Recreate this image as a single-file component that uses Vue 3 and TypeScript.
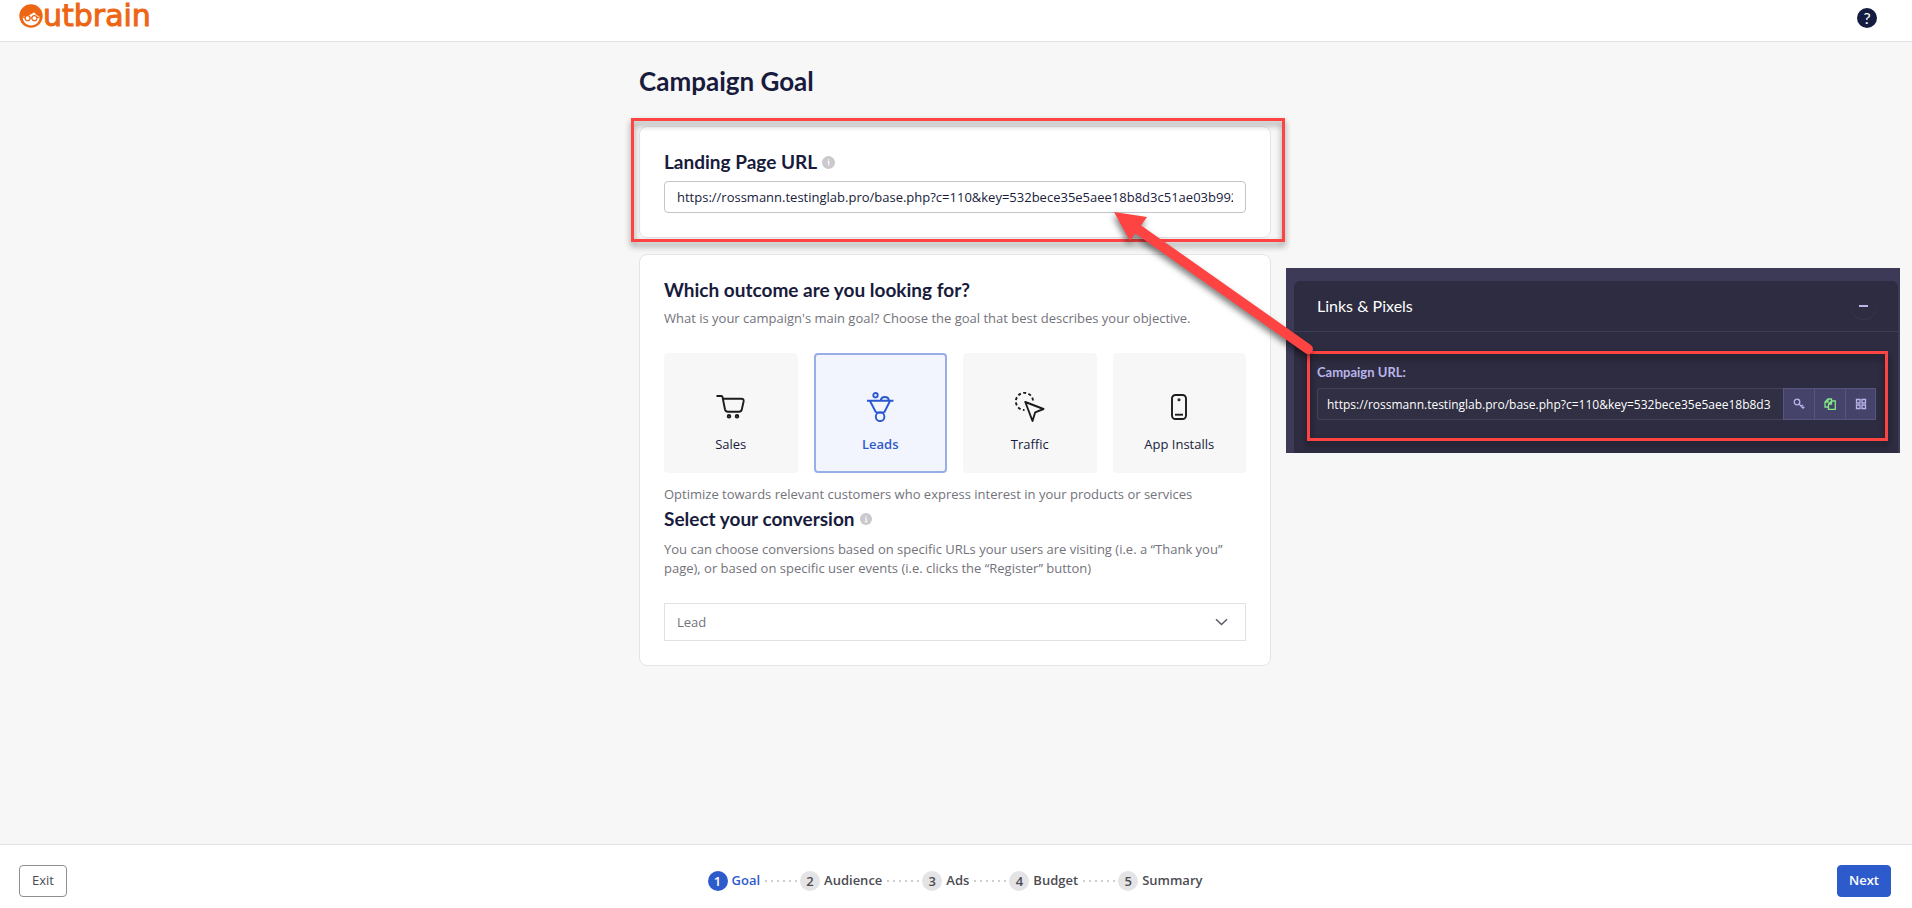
<script setup lang="ts">
import { ref } from 'vue'

interface Goal {
  id: string
  label: string
}

const goals: Goal[] = [
  { id: 'sales', label: 'Sales' },
  { id: 'leads', label: 'Leads' },
  { id: 'traffic', label: 'Traffic' },
  { id: 'apps', label: 'App Installs' },
]
const steps: string[] = ['Goal', 'Audience', 'Ads', 'Budget', 'Summary']

const selected = ref<string>('leads')
const conversion = ref<string>('Lead')
const landingUrl = ref<string>(
  'https://rossmann.testinglab.pro/base.php?c=110&key=532bece35e5aee18b8d3c51ae03b992',
)
const campaignUrl = ref<string>(
  'https://rossmann.testinglab.pro/base.php?c=110&key=532bece35e5aee18b8d3',
)
</script>

<template>
  <div class="app">
    <header class="topbar">
      <a class="logo" href="#" aria-label="Outbrain">
        <svg width="24" height="24" viewBox="0 0 24 24" aria-hidden="true">
          <circle cx="12" cy="12" r="11.7" fill="#ee6513" />
          <path
            d="M3.600 12.800C8 12.300 12.500 10.500 15.200 8.200C16.500 10.200 18.500 11.800 20.600 12.500C21 17.600 17 21.500 12.100 21.500C7.300 21.500 3.600 18 3.600 12.800Z"
            fill="#fff"
          />
          <g fill="#fff" stroke="#ee6513" stroke-width="1.2">
            <circle cx="8.6" cy="14.2" r="2.5" />
            <circle cx="15.4" cy="14.2" r="2.5" />
            <path d="M11.100 13.800h1.800M6.100 13.600L3.200 13M17.900 13.600L20.800 13" fill="none" />
          </g>
        </svg>
        <span class="wordmark">utbrain</span>
      </a>
      <button class="help" type="button" aria-label="Help">?</button>
    </header>

    <main class="content">
      <div class="column">
        <h1>Campaign Goal</h1>

        <section class="card">
          <h2>
            <label for="landing">Landing Page URL</label>
            <svg class="info" width="13" height="13" viewBox="0 0 13 13" aria-hidden="true">
              <circle cx="6.5" cy="6.5" r="6.5" fill="#c9c9ce" />
              <path d="M5.600 5.600h1.200v4M6.500 3.200v1.200" fill="none" stroke="#fff" stroke-width="1.100" />
            </svg>
          </h2>
          <input id="landing" v-model="landingUrl" class="url" type="text" />
        </section>

        <section class="card">
          <h2>Which outcome are you looking for?</h2>
          <p class="lead">What is your campaign's main goal? Choose the goal that best describes your objective.</p>
          <div class="tiles">
            <button
              v-for="goal in goals"
              :key="goal.id"
              type="button"
              class="tile"
              :class="{ active: goal.id === selected }"
              :aria-pressed="goal.id === selected"
              @click="selected = goal.id"
            >
              <span class="glyph">
                <svg v-if="goal.id === 'sales'" width="30" height="24" viewBox="0 0 30 24">
                  <path d="M0.500 1H5.500Q6.300 1 6.500 2L9 14.500Q9.500 16.700 11.800 16.700H23Q25.300 16.700 25.800 14.500L27.600 6.500Q28 3.700 25.500 3.700H6.900" />
                  <circle cx="13" cy="21.300" r="1.300" />
                  <circle cx="21" cy="21.300" r="1.300" />
                </svg>
                <svg v-else-if="goal.id === 'leads'" width="27" height="30" viewBox="0 0 27 30">
                  <path d="M0 8.700H26.500M3 9L9 20.500M23 9L17.200 20.500M9 20.500H17.200M13.700 8.500A4.200 4.200 0 0 1 22 8.500" />
                  <circle cx="8.5" cy="3.2" r="2.2" />
                  <circle cx="13.1" cy="24.7" r="4.3" />
                </svg>
                <svg v-else-if="goal.id === 'traffic'" width="30" height="30" viewBox="0 0 30 30">
                  <path d="M18 8.500A8.600 8.600 0 1 0 9.500 18" stroke-dasharray="3 2.400" />
                  <path d="M10.300 10L28.500 17L20.200 20.300L17.500 29Z" stroke-linejoin="round" />
                </svg>
                <svg v-else width="16" height="26" viewBox="0 0 16 26">
                  <rect x="1" y="1" width="14" height="24" rx="3.500" />
                  <path d="M4 20.700H12" />
                  <circle cx="8" cy="5.800" r="0.600" />
                </svg>
              </span>
              <span>{{ goal.label }}</span>
            </button>
          </div>
          <p class="hint">Optimize towards relevant customers who express interest in your products or services</p>
          <h2 class="second">
            <label for="conversion">Select your conversion</label>
            <svg class="info" width="12" height="12" viewBox="0 0 13 13" aria-hidden="true">
              <circle cx="6.5" cy="6.5" r="6.5" fill="#c9c9ce" />
              <path d="M5.300 5.600h1.500v4M5 9.600h3M6.500 3v1.400" fill="none" stroke="#fff" stroke-width="1.100" />
            </svg>
          </h2>
          <p class="detail">
            You can choose conversions based on specific URLs your users are visiting (i.e. a “Thank you” page), or
            based on specific user events (i.e. clicks the “Register” button)
          </p>
          <div class="picker">
            <select id="conversion" v-model="conversion">
              <option>Lead</option>
            </select>
            <svg width="13" height="8" viewBox="0 0 13 8" aria-hidden="true">
              <path d="M1 1.200L6.500 6.500L12 1.200" fill="none" stroke="#5c5c66" stroke-width="1.500" />
            </svg>
          </div>
        </section>

        <div class="marker marker-landing"></div>

        <aside class="panel">
          <div class="panel-card">
            <div class="panel-head">
              <h3>Links &amp; Pixels</h3>
              <button class="collapse" type="button" aria-label="Collapse"><i></i></button>
            </div>
            <div class="panel-body">
              <label for="campaign">Campaign URL:</label>
              <div class="group">
                <input id="campaign" v-model="campaignUrl" type="text" />
                <button type="button" aria-label="Key">
                  <svg width="12" height="12" viewBox="0 0 12 12">
                    <circle cx="4" cy="4" r="2.800" />
                    <path d="M6 6L10.500 10.500M8.500 8.500L10 7M10 10.300L11.300 8.800" />
                  </svg>
                </button>
                <button class="copy" type="button" aria-label="Copy">
                  <svg width="12" height="12" viewBox="0 0 12 12">
                    <path d="M4.500 9H1V4L4 1H7.500V3M4 1V4H1M4.500 11.300V6L7.500 3H11.300V11.300ZM7.500 3V6H4.500" />
                  </svg>
                </button>
                <button type="button" aria-label="QR code">
                  <svg width="12" height="12" viewBox="0 0 12 12">
                    <path d="M1.500 1.500h3.500v3.500h-3.500zM7 1.500h3.500v3.500h-3.500zM1.500 7h3.500v3.500h-3.500zM7 7h3.500v3.500h-3.500z" />
                  </svg>
                </button>
              </div>
            </div>
          </div>
          <div class="marker marker-campaign"></div>
        </aside>

        <svg class="arrow" width="210" height="150" viewBox="0 0 210 150" aria-hidden="true">
          <path d="M29 20L198 139" stroke="#fe4343" stroke-width="10" stroke-linecap="round" />
          <path d="M4 2L37 7L20 31Z" fill="#fe4343" />
        </svg>
      </div>
    </main>

    <footer class="bottombar">
      <button class="exit" type="button">Exit</button>
      <ol class="steps">
        <li v-for="(step, i) in steps" :key="step" :class="{ current: i === 0 }">
          <b>{{ i + 1 }}</b>
          <span>{{ step }}</span>
          <svg v-if="i < steps.length - 1" width="34" height="2" viewBox="0 0 34 2" aria-hidden="true">
            <path d="M1 1H33" stroke="#cfcfd2" stroke-width="2" stroke-dasharray="2 4" />
          </svg>
        </li>
      </ol>
      <button class="next" type="button">Next</button>
    </footer>
  </div>
</template>

<style>
body {
  margin: 0;
  background: #f7f7f7;
}
</style>

<style scoped>
.app {
  display: flex;
  flex-direction: column;
  min-height: 100vh;
  font: 13px/19px 'Open Sans', sans-serif;
  color: #181b3c;
}
.app *,
.app {
  box-sizing: border-box;
}
button,
input,
select {
  font: inherit;
  color: inherit;
}
button {
  cursor: pointer;
}
.topbar {
  display: flex;
  justify-content: space-between;
  align-items: flex-start;
  height: 42px;
  padding: 0 35px 0 19px;
  background: #fff;
  border-bottom: 1px solid #e2e2e4;
}
.logo {
  display: flex;
  padding-top: 4px;
  color: #ee6513;
  text-decoration: none;
}
.wordmark {
  font: 30px/24px 'DejaVu Sans', sans-serif;
  -webkit-text-stroke: 1px #ee6513;
}
.help {
  width: 20px;
  height: 20px;
  margin-top: 8px;
  padding: 0;
  border: 0;
  border-radius: 50%;
  background: #151c41;
  color: #fff;
  font: 16px/20px Lato, sans-serif;
}
.content {
  flex: 1;
  padding: 23px 2px 24px 0;
  overflow: hidden;
}
.column {
  position: relative;
  width: 632px;
  max-width: 100%;
  margin: 0 auto;
}
h1,
h2,
h3,
p {
  margin: 0;
}
h1 {
  margin-bottom: 29px;
  font: 700 26px/32px Lato, sans-serif;
}
h2 {
  display: flex;
  align-items: center;
  gap: 5px;
  margin-bottom: 8px;
  font: 700 19px/22px Lato, sans-serif;
}
.card {
  padding: 24px;
  border: 1px solid #e5e5e7;
  border-radius: 8px;
  background: #fff;
}
.card + .card {
  margin-top: 16px;
}
.url {
  display: block;
  width: 100%;
  height: 32px;
  padding: 0 12px;
  border: 1px solid #c4c4c8;
  border-radius: 4px;
  background: #fff;
}
.lead,
.hint,
.detail {
  color: #73737b;
}
.tiles {
  display: grid;
  grid-template-columns: repeat(4, 1fr);
  gap: 16px;
  margin: 25px 0 12px;
}
.tile {
  display: flex;
  flex-direction: column;
  align-items: center;
  height: 120px;
  padding: 32px 0 0;
  border: 2px solid #f7f7f7;
  border-radius: 4px;
  background: #f7f7f7;
}
.tile.active {
  border-color: #97aee6;
  background: #f2f5fe;
  color: #2f5bc9;
  font-weight: 600;
}
.glyph {
  display: flex;
  align-items: center;
  justify-content: center;
  height: 40px;
  margin-bottom: 8px;
  color: #1c1c1e;
}
.active .glyph {
  color: #2a59cf;
}
.glyph svg {
  fill: none;
  stroke: currentColor;
  stroke-width: 1.9;
}
h2.second {
  margin: 4px 0 10px;
}
.picker {
  position: relative;
  margin-top: 25px;
}
.picker select {
  display: block;
  width: 100%;
  height: 38px;
  padding: 0 12px;
  border: 1px solid #e2e2e4;
  border-radius: 0;
  background: #fff;
  color: #73737b;
  appearance: none;
}
.picker svg {
  position: absolute;
  right: 18px;
  top: 15px;
  pointer-events: none;
}
.marker {
  position: absolute;
  border: 3px solid #fe4343;
  filter: drop-shadow(0 4px 3px rgba(0, 0, 0, 0.45));
  pointer-events: none;
}
.marker-landing {
  left: -8px;
  top: 53px;
  width: 654px;
  height: 124px;
}
.panel {
  position: absolute;
  left: 647px;
  top: 203px;
  width: 614px;
  height: 185px;
  padding: 13px 2px 0 8px;
  background: #3d3a58;
  color: #fff;
  font-family: Lato, sans-serif;
}
.panel-card {
  height: 100%;
  border-radius: 6px 6px 0 0;
  background: #2d2c40;
}
.panel-head {
  display: flex;
  align-items: center;
  justify-content: space-between;
  height: 51px;
  padding: 0 22px 0 23px;
  border-bottom: 1px solid #3d3c52;
}
h3 {
  font: 16px/24px Lato, sans-serif;
}
.collapse {
  display: flex;
  align-items: center;
  justify-content: center;
  width: 25px;
  height: 25px;
  padding: 0;
  border: 0;
  border-radius: 50%;
  background: none;
  box-shadow: 0 1px 2px #3a394d;
}
.collapse i {
  width: 9px;
  height: 2px;
  background: #b9b4ea;
}
.panel-body {
  padding: 30px 22px 0 23px;
}
.panel-body label {
  display: block;
  margin-bottom: 6px;
  color: #b9b4ea;
  font-size: 13px;
  line-height: 20px;
  font-weight: 700;
}
.group {
  display: flex;
}
.group input {
  flex: 1;
  min-width: 0;
  height: 32px;
  padding: 0 9px;
  border: 1px solid #434259;
  border-right: 0;
  border-radius: 3px 0 0 3px;
  background: #302f43;
  font-family: 'Open Sans', sans-serif;
  font-size: 12px;
}
.group button {
  display: flex;
  align-items: center;
  justify-content: center;
  width: 31px;
  height: 32px;
  padding: 0;
  border: 1px solid #57547f;
  border-right-width: 0;
  background: #46436b;
  color: #b9b4ea;
}
.group button:last-child {
  border-right-width: 1px;
}
.group .copy {
  color: #83e887;
}
.group svg {
  fill: none;
  stroke: currentColor;
  stroke-width: 1.3;
}
.marker-campaign {
  left: 21px;
  top: 83px;
  width: 581px;
  height: 90px;
}
.arrow {
  position: absolute;
  left: 471px;
  top: 145px;
  overflow: visible;
  filter: drop-shadow(-1px 4px 3px rgba(0, 0, 0, 0.5));
  pointer-events: none;
}
.bottombar {
  display: flex;
  align-items: center;
  justify-content: space-between;
  height: 64px;
  padding: 8px 21px 0 19px;
  background: #fff;
  border-top: 1px solid #e2e2e4;
}
.exit,
.next {
  height: 32px;
  padding: 0 12px;
  border: 1px solid #8e8e93;
  border-radius: 4px;
  background: #fff;
  color: #4a4a55;
}
.next {
  padding: 0 11px;
  border-color: #2d5bcb;
  background: #2d5bcb;
  color: #fff;
  font-weight: 600;
}
.steps {
  display: flex;
  gap: 2px;
  margin: 0;
  padding: 0 0 0 6px;
  list-style: none;
  color: #4c4c52;
  font-weight: 600;
}
.steps li {
  display: flex;
  align-items: center;
  gap: 4px;
}
.steps b {
  width: 20px;
  height: 20px;
  border-radius: 50%;
  background: #e4e4e7;
  text-align: center;
  line-height: 20px;
  font-weight: 600;
}
.steps .current {
  color: #2d5bcb;
}
.steps .current b {
  background: #2d5bcb;
  color: #fff;
}
</style>
